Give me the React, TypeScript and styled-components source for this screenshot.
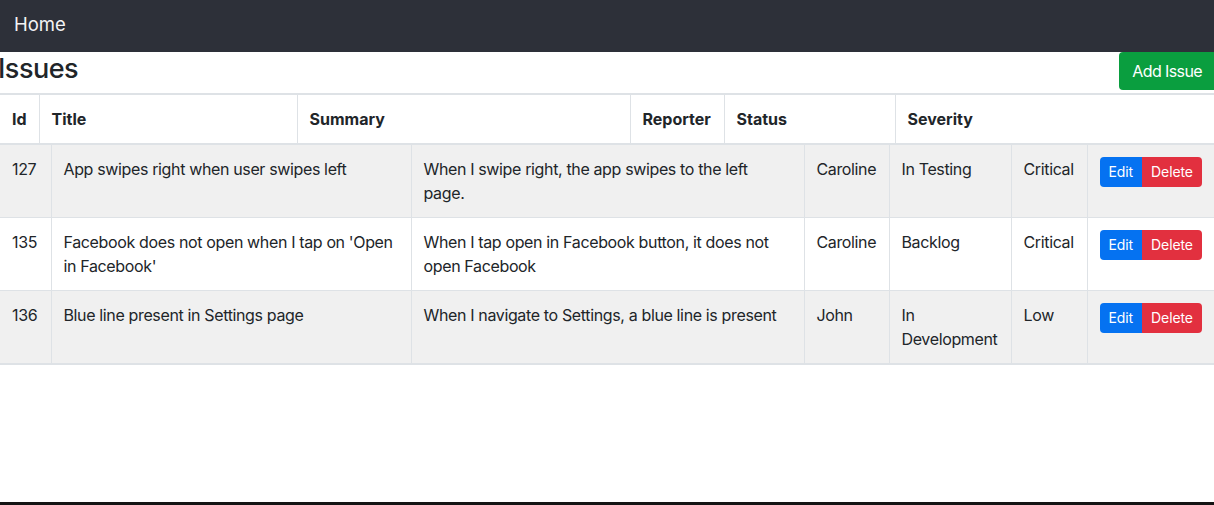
import React from "react";
import styled, { createGlobalStyle } from "styled-components";

const GlobalStyle = createGlobalStyle`
  * { box-sizing: border-box; }
  html, body { margin: 0; padding: 0; }
  body {
    font-family: Inter, "Noto Sans", "Liberation Sans", sans-serif;
    font-size: 16px;
    line-height: 24px;
    color: #212529;
    background: #ffffff;
    overflow: hidden;
  }
`;

const Page = styled.div`
  display: flex;
  flex-direction: column;
  min-height: 100vh;
`;

const NavBar = styled.nav`
  height: 52px;
  background: #2d3039;
  display: flex;
  align-items: center;
  padding: 0 14px 4px;
`;

const Brand = styled.a`
  color: #f4f4f5;
  font-size: 18.5px;
  line-height: 24px;
  text-decoration: none;
`;

const TitleBar = styled.div`
  display: flex;
  justify-content: space-between;
  align-items: flex-start;
`;

const Heading = styled.h3`
  margin: 0 0 7.4px -2px;
  font-size: 27px;
  font-weight: 500;
  letter-spacing: -0.5px;
  line-height: 33.6px;
  color: #212529;
`;

const Button = styled.button<{ $variant: "success" | "primary" | "danger"; $size?: "sm" }>`
  font-family: inherit;
  border: 1px solid transparent;
  color: #ffffff;
  cursor: pointer;
  letter-spacing: ${(p) => (p.$size === "sm" ? "-0.1px" : "-0.6px")};
  font-size: ${(p) => (p.$size === "sm" ? "14px" : "16px")};
  line-height: ${(p) => (p.$size === "sm" ? "20px" : "24px")};
  padding: ${(p) => (p.$size === "sm" ? "4px 8px" : "6px 12px")};
  border-radius: 4px;
  background: ${(p) =>
    p.$variant === "success" ? "#0a9e3f" : p.$variant === "primary" ? "#0572f1" : "#e2303f"};
`;

const AddButton = styled(Button)`
  margin-right: -1px;
  border-radius: 4px 0 0 4px;
`;

const Table = styled.table`
  width: 100%;
  table-layout: fixed;
  border-collapse: collapse;
`;

const HeadRow = styled.tr`
  border-top: 2px solid #dee2e6;
  border-bottom: 2px solid #dee2e6;
`;

const Th = styled.th`
  text-align: left;
  font-weight: 700;
  padding: 12px;
  vertical-align: top;
  border-left: 1px solid #dee2e6;
  &:first-child { border-left: none; }
`;

const BodyRow = styled.tr<{ $striped: boolean }>`
  background: ${(p) => (p.$striped ? "#f0f0f0" : "#ffffff")};
  border-bottom: 1px solid #dee2e6;
  &:last-child { border-bottom: 2px solid #dee2e6; }
`;

const Td = styled.td`
  padding: 12px;
  vertical-align: top;
  letter-spacing: -0.36px;
  border-left: 1px solid #dee2e6;
  &:first-child { border-left: none; }
`;

const ButtonGroup = styled.div`
  display: flex;
  & > button:first-child { border-top-right-radius: 0; border-bottom-right-radius: 0; }
  & > button:last-child { border-top-left-radius: 0; border-bottom-left-radius: 0; }
`;

const BottomEdge = styled.div`
  margin-top: auto;
  height: 3px;
  background: #141414;
`;

const issues = [
  {
    id: 127,
    title: "App swipes right when user swipes left",
    summary: "When I swipe right, the app swipes to the left page.",
    reporter: "Caroline",
    status: "In Testing",
    severity: "Critical",
  },
  {
    id: 135,
    title: "Facebook does not open when I tap on 'Open in Facebook'",
    summary: "When I tap open in Facebook button, it does not open Facebook",
    reporter: "Caroline",
    status: "Backlog",
    severity: "Critical",
  },
  {
    id: 136,
    title: "Blue line present in Settings page",
    summary: "When I navigate to Settings, a blue line is present",
    reporter: "John",
    status: "In Development",
    severity: "Low",
  },
];

const headCols = [39, 258, 333, 94, 171];
const bodyCols = [51, 360, 393, 85, 122, 76];

export default function App() {
  return (
    <>
      <GlobalStyle />
      <Page>
        <NavBar>
          <Brand href="#">Home</Brand>
        </NavBar>
        <TitleBar>
          <Heading>Issues</Heading>
          <AddButton $variant="success">Add Issue</AddButton>
        </TitleBar>
        <Table>
          <colgroup>
            {headCols.map((w, i) => (
              <col key={i} style={{ width: w }} />
            ))}
            <col />
          </colgroup>
          <thead>
            <HeadRow>
              <Th>Id</Th>
              <Th>Title</Th>
              <Th>Summary</Th>
              <Th>Reporter</Th>
              <Th>Status</Th>
              <Th>Severity</Th>
            </HeadRow>
          </thead>
        </Table>
        <Table>
          <colgroup>
            {bodyCols.map((w, i) => (
              <col key={i} style={{ width: w }} />
            ))}
            <col />
          </colgroup>
          <tbody>
            {issues.map((it, i) => (
              <BodyRow key={it.id} $striped={i % 2 === 0}>
                <Td>{it.id}</Td>
                <Td>{it.title}</Td>
                <Td>{it.summary}</Td>
                <Td>{it.reporter}</Td>
                <Td>{it.status}</Td>
                <Td>{it.severity}</Td>
                <Td>
                  <ButtonGroup>
                    <Button $variant="primary" $size="sm">Edit</Button>
                    <Button $variant="danger" $size="sm">Delete</Button>
                  </ButtonGroup>
                </Td>
              </BodyRow>
            ))}
          </tbody>
        </Table>
        <BottomEdge />
      </Page>
    </>
  );
}
